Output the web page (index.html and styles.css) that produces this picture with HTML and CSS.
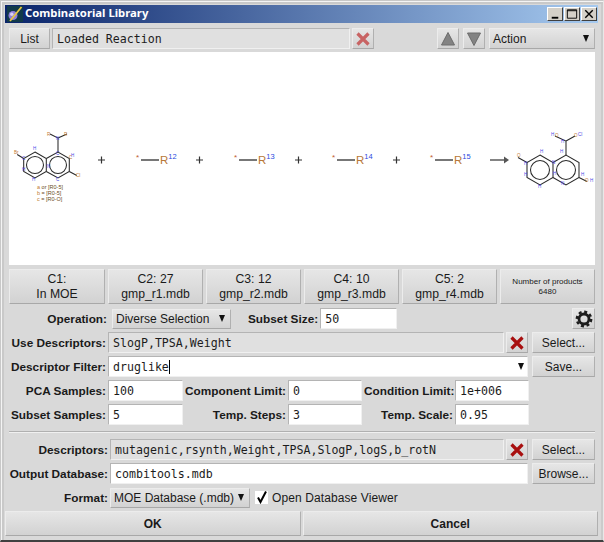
FILE: index.html
```html
<!DOCTYPE html>
<html lang="en">
<head>
<meta charset="utf-8">
<title>Combinatorial Library</title>
<link rel="stylesheet" href="styles.css">
</head>
<body>
<div class="window">
  <header class="titlebar">
    <svg class="app-icon" viewBox="0 0 16 16" width="16" height="16">
      <rect width="16" height="16" fill="#123a4a"/>
      <circle cx="6" cy="9.500" r="4.500" fill="#8f7fd8"/>
      <circle cx="4.800" cy="8.200" r="1.700" fill="#d8d0f4"/>
      <path d="M3 15 L14.500 1" stroke="#e8c840" stroke-width="1.800"/>
    </svg>
    <span class="title-text">Combinatorial Library</span>
    <div class="win-controls">
      <button class="win-btn"><svg viewBox="0 0 15 14" width="15" height="14"><rect x="4" y="10" width="7" height="2" fill="#000"/></svg></button>
      <button class="win-btn"><svg viewBox="0 0 15 14" width="15" height="14"><path d="M2.500 2.500h10v9h-10z M2.500 3.500h10" fill="none" stroke="#000"/></svg></button>
      <button class="win-btn"><svg viewBox="0 0 15 14" width="15" height="14"><path d="M3.500 3l8 8M11.500 3l-8 8" stroke="#000" stroke-width="1.500"/></svg></button>
    </div>
  </header>

  <main class="content">
    <div class="toolbar">
      <button class="btn list-btn">List</button>
      <div class="field mono readonly reaction-field">Loaded Reaction</div>
      <button class="btn icon-btn"><svg viewBox="0 0 16 16" width="16" height="16"><path d="M2.500 2.500l11 11M13.500 2.500l-11 11" stroke="#c86464" stroke-width="3.200"/></svg></button>
      <div class="spacer"></div>
      <button class="btn icon-btn"><svg viewBox="0 0 16 16" width="16" height="16"><path d="M8 1.500L14.500 14h-13z" fill="#838383" stroke="#6c6c6c"/></svg></button>
      <button class="btn icon-btn arrow-down"><svg viewBox="0 0 16 16" width="16" height="16"><path d="M1.500 2h13L8 14.500z" fill="#838383" stroke="#6c6c6c"/></svg></button>
      <button class="btn select action-select"><span>Action</span><i class="caret"></i></button>
    </div>

    <div class="canvas">
      <svg class="scheme" viewBox="9 52 586 213" width="586" height="213">
        <g class="bonds">
          <path d="M35 152l11.300 6.500v13L35 178l-11.300-6.500v-13z"/>
          <path d="M46.300 158.500L58 152l11.300 6.500v13L58 178l-11.700-6.500"/>
          <circle cx="35" cy="165" r="8.500"/>
          <circle cx="58" cy="165" r="8.500"/>
          <path d="M58 152v-14l-8-4M58 138l9-4M23.700 158.500l-6.500-4M69.300 171.500l7.500 4"/>
        </g>
        <g class="atom-n">
          <text x="56" y="140">N</text><text x="56" y="155">C</text><text x="33" y="150">H</text><text x="22" y="160">C</text><text x="22" y="171">H</text><text x="32" y="181">H</text><text x="47" y="168">N</text><text x="71" y="157">H</text><text x="56" y="181">C</text>
        </g>
        <g class="atom-o">
          <text x="47" y="136">R</text><text x="64" y="136">R</text><text x="14" y="154">Br</text><text x="76" y="177">Cl</text><text x="69" y="159">C</text>
        </g>
        <g class="legend">
          <text x="37" y="189"><tspan class="leg-o">a</tspan> or [R0-5]</text>
          <text x="37" y="195"><tspan class="leg-o">b</tspan> = [R0-5]</text>
          <text x="37" y="201"><tspan class="leg-o">c</tspan> = [R0-O]</text>
        </g>

        <g class="plus"><path d="M98 160h7M101.500 156.500v7M196 160h7M199.500 156.500v7M295 160h7M298.500 156.500v7M393 160h7M396.500 156.500v7"/></g>

        <path class="link" d="M141 160h18M239 160h18M337 160h18M435 160h18"/>
        <g class="star">
          <text x="136" y="160">*</text><text x="234" y="160">*</text><text x="332" y="160">*</text><text x="430" y="160">*</text>
        </g>
        <g class="rgroup">
          <text x="160" y="164">R<tspan class="sup" dy="-5">12</tspan></text>
          <text x="258" y="164">R<tspan class="sup" dy="-5">13</tspan></text>
          <text x="356" y="164">R<tspan class="sup" dy="-5">14</tspan></text>
          <text x="454" y="164">R<tspan class="sup" dy="-5">15</tspan></text>
        </g>

        <path class="link" d="M490 160h16"/>
        <path class="arrowhead" d="M509 160l-5-3.500v7z"/>

        <g class="bonds">
          <path d="M540 155l13 7.500v15l-13 7.500-13-7.500v-15z"/>
          <path d="M553 162.500L566 155l13 7.500v15l-13 7.500-13-7.500"/>
          <circle cx="540" cy="170" r="9.500"/>
          <circle cx="566" cy="170" r="9.500"/>
          <path d="M566 155v-14l-11-5M566 141l9-5M527 162.500l-9-5M579 177.500l8 4"/>
        </g>
        <g class="atom-n">
          <text x="551" y="136">H</text><text x="561" y="143">H</text><text x="560" y="153">H</text><text x="540" y="153">H</text><text x="524" y="165">H</text><text x="524" y="176">H</text><text x="538" y="188">H</text><text x="552" y="164">N</text><text x="553" y="175">H</text><text x="561" y="185">N</text><text x="581" y="176">H</text><text x="590" y="182">H</text><text x="578" y="136">Cl</text>
        </g>
        <g class="atom-o">
          <text x="517" y="157">O</text><text x="555" y="137">O</text><text x="574" y="137">O</text><text x="585" y="182">O</text>
        </g>
      </svg>
    </div>

    <div class="components">
      <button class="btn comp">C1:<br>In MOE</button>
      <button class="btn comp">C2: 27<br>gmp_r1.mdb</button>
      <button class="btn comp">C3: 12<br>gmp_r2.mdb</button>
      <button class="btn comp">C4: 10<br>gmp_r3.mdb</button>
      <button class="btn comp">C5: 2<br>gmp_r4.mdb</button>
      <button class="btn comp count">Number of products<br>6480</button>
    </div>

    <div class="form">
      <div class="row">
        <label class="label label-a op-label">Operation:</label>
        <button class="btn select op-select"><span>Diverse Selection</span><i class="caret"></i></button>
        <label class="label subset-label">Subset Size:</label>
        <div class="field mono subset-field">50</div>
        <div class="spacer"></div>
        <button class="btn icon-btn gear-btn"><svg viewBox="0 0 18 18" width="18" height="18"><circle cx="9" cy="9" r="5" fill="none" stroke="#1c1c1c" stroke-width="2.800"/><circle cx="9" cy="9" r="7.200" fill="none" stroke="#1c1c1c" stroke-width="2.400" stroke-dasharray="3 2.650"/></svg></button>
      </div>
      <div class="row">
        <label class="label label-a">Use Descriptors:</label>
        <div class="field mono readonly grow">SlogP,TPSA,Weight</div>
        <button class="btn icon-btn"><svg viewBox="0 0 16 16" width="16" height="16"><path d="M2.500 2.500l11 11M13.500 2.500l-11 11" stroke="#a80f0f" stroke-width="3.200"/></svg></button>
        <button class="btn side-btn">Select...</button>
      </div>
      <div class="row">
        <label class="label label-a">Descriptor Filter:</label>
        <div class="field mono grow filter-field"><span class="typed">druglike</span><i class="caret"></i></div>
        <button class="btn side-btn">Save...</button>
      </div>
      <div class="params">
        <label class="label">PCA Samples:</label>
        <div class="field mono">100</div>
        <label class="label">Component Limit:</label>
        <div class="field mono">0</div>
        <label class="label">Condition Limit:</label>
        <div class="field mono">1e+006</div>
        <label class="label">Subset Samples:</label>
        <div class="field mono">5</div>
        <label class="label">Temp. Steps:</label>
        <div class="field mono">3</div>
        <label class="label">Temp. Scale:</label>
        <div class="field mono">0.95</div>
      </div>
      <hr class="sep">
      <div class="row">
        <label class="label label-b">Descriptors:</label>
        <div class="field mono readonly grow">mutagenic,rsynth,Weight,TPSA,SlogP,logS,b_rotN</div>
        <button class="btn icon-btn"><svg viewBox="0 0 16 16" width="16" height="16"><path d="M2.500 2.500l11 11M13.500 2.500l-11 11" stroke="#a80f0f" stroke-width="3.200"/></svg></button>
        <button class="btn side-btn">Select...</button>
      </div>
      <div class="row">
        <label class="label label-b">Output Database:</label>
        <div class="field mono grow">combitools.mdb</div>
        <button class="btn side-btn">Browse...</button>
      </div>
      <div class="row">
        <label class="label label-b">Format:</label>
        <button class="btn select format-select"><span>MOE Database (.mdb)</span><i class="caret"></i></button>
        <div class="check">
          <svg viewBox="0 0 13 13" width="13" height="13"><rect width="13" height="13" fill="#fff"/><path d="M3 6.500l2.500 4.500L11 0.500" fill="none" stroke="#000" stroke-width="2"/></svg>
          <span>Open Database Viewer</span>
        </div>
      </div>
    </div>

    <div class="actions">
      <button class="btn action-btn">OK</button>
      <button class="btn action-btn">Cancel</button>
    </div>
  </main>
</div>
</body>
</html>
```

FILE: styles.css
```css
* { box-sizing: border-box; }
html, body { margin: 0; padding: 0; }
body { width: 604px; height: 542px; overflow: hidden; background: #d9d9d9; font-family: "Liberation Sans", Arial, sans-serif; font-size: 12px; color: #1a1a1a; }

.window {
  width: 604px; height: 542px;
  display: flex; flex-direction: column;
  padding: 5px 5px 2px 5px;
  background: #d9d9d9;
  border-top: 1px solid #c8c8c8;
  border-left: 1px solid #c8c8c8;
  border-right: 1px solid #e8e8e8;
  border-bottom: 2px solid #404040;
  box-shadow: inset 1px 1px 0 #f4f4f4, inset 3px 3px 0 #c9c9c9, inset -2px 0 0 #cbcbcb;
}

.titlebar {
  height: 18px; flex: none;
  margin-top: -1px; margin-left: -1px;
  display: flex; align-items: center;
  padding: 0 1px 0 2px;
  background: linear-gradient(90deg, #0a246a 0%, #a6caf0 100%);
}
.app-icon { flex: none; margin-right: 2px; }
.title-text { color: #fff; font-family: "Noto Sans", sans-serif; font-weight: bold; font-size: 11.300px; line-height: 16px; margin-bottom: 2px; }
.win-controls { margin-left: auto; display: flex; gap: 1px; }
.win-btn { width: 16px; height: 14px; padding: 0; border: 1px solid; border-color: #fff #404040 #404040 #fff; background: #d4d0c8; display: flex; align-items: center; justify-content: center; }

.content { flex: 1; display: flex; flex-direction: column; padding: 5px 3px 0 4px; min-height: 0; margin-left: -1px; }

.btn {
  font: inherit; color: #1a1a1a; padding: 0; margin: 0;
  background: linear-gradient(#e6e6e6, #d2d2d2);
  border: 1px solid; border-color: #ececec #b0b0b0 #a8a8a8 #ececec;
  display: flex; align-items: center; justify-content: center;
  flex: none; text-align: center;
}
.field {
  height: 21px; padding: 0 0 0 4px;
  display: flex; align-items: center;
  background: #fff; white-space: pre;
  border: 1px solid; border-color: #b4b4b4 #f0f0f0 #f0f0f0 #b4b4b4;
}
.field.readonly { background: #e0e0e0; }
.mono { font-family: "DejaVu Sans Mono", monospace; font-size: 11.600px; color: #1c1c1c; }
.grow { flex: 1; min-width: 0; }
.spacer { flex: 1; }

.toolbar { display: flex; height: 21px; gap: 2px; flex: none; }
.list-btn { width: 41px; }
.reaction-field { width: 298px; }
.icon-btn { width: 22px; height: 21px; }
.arrow-down { margin-left: 2px; }
.select { justify-content: space-between; padding: 0 5px 0 3px; }
.action-select { width: 106px; margin-left: 2px; padding-left: 3px; }
.caret { width: 0; height: 0; border-left: 3.500px solid transparent; border-right: 3.500px solid transparent; border-top: 7px solid #111; flex: none; }

.canvas { height: 213px; margin-top: 3px; background: #fff; flex: none; }
.scheme { display: block; }
.bonds path, .bonds circle { fill: none; stroke: #2a2a2a; stroke-width: 1.050; }
.atom-n text { font: 4.500px "Liberation Sans", sans-serif; fill: #4a4ae8; }
.atom-o text { font: 4.500px "Liberation Sans", sans-serif; fill: #c07a30; }
.legend text { font: 5.500px "Liberation Sans", sans-serif; fill: #6a4a20; }
.leg-o { fill: #c07a30; }
.plus path { stroke: #333; stroke-width: 1.200; fill: none; }
.link { stroke: #777; stroke-width: 1.800; fill: none; }
.arrowhead { fill: #555; }
.star text { font: 8px "Liberation Sans", sans-serif; fill: #c06030; }
.rgroup text { font: 11.500px "Liberation Sans", sans-serif; fill: #b87838; }
.sup { font-size: 7.500px; fill: #2a4ae0; }

.components { display: flex; gap: 3px; margin-top: 4px; height: 35px; flex: none; }
.comp { flex: none; width: 95px; height: 35px; line-height: 15px; font-size: 12.200px; display: block; }
.comp:first-child { width: 96px; }
.comp.count { font-size: 8px; line-height: 10px; width: 95px; }

.form { display: flex; flex-direction: column; gap: 3px; margin-top: 4px; flex: none; }
.row { display: flex; align-items: center; height: 21px; gap: 2px; }
.label { font-weight: bold; font-size: 11.800px; text-align: right; white-space: nowrap; display: block; }
.label-a { width: 97px; flex: none; }
.label-b { width: 99px; flex: none; }
.op-label { width: 98px; margin-right: 3px; }
.op-select { width: 119px; height: 20px; }
.subset-label { margin-left: 15px; }
.subset-field { width: 77px; }
.gear-btn { width: 23px; }
.side-btn { width: 63px; height: 21px; margin-left: 2px; }
.filter-field { padding-right: 3px; }
.typed { border-right: 1px solid #000; padding-right: 0; line-height: 14px; margin-right: auto; }

.params { display: grid; grid-template-columns: 97px 75px 101px 74px 89px 74px; column-gap: 2px; row-gap: 3px; align-items: center; }
.sep { width: 100%; margin: 3px 0 3px; border: 0; height: 2px; border-top: 1px solid #b0b0b0; border-bottom: 1px solid #f0f0f0; }

.format-select { width: 140px; height: 20px; margin-left: 0; }
.check { display: flex; align-items: center; gap: 4px; margin-left: 3px; letter-spacing: 0.100px; }

.actions { display: flex; gap: 2px; margin: 3px -3px 0 -4px; height: 25px; flex: none; }
.action-btn { flex: 1; font-weight: bold; }
```
